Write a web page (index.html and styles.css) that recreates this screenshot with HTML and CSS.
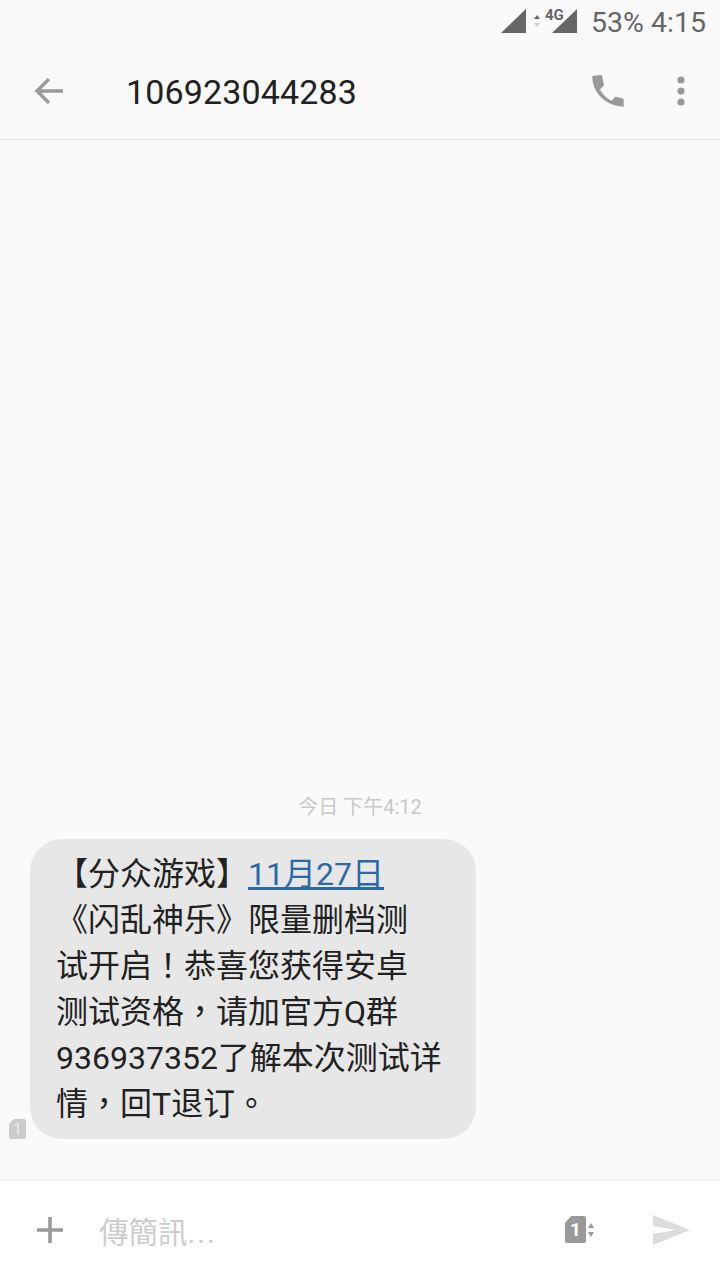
FILE: index.html
```html
<!DOCTYPE html>
<html lang="zh">
<head>
  <meta charset="UTF-8">
  <meta name="viewport" content="width=device-width, initial-scale=1.0">
  <title>106923044283</title>
  <link rel="stylesheet" href="styles.css">
</head>
<body>

<div class="screen">
  <div class="status">
    <svg class="status-icons" width="78" height="30" viewBox="0 -4 78 30">
      <polygon points="1,25 26,1 26,25" fill="#666"/>
      <polygon points="34,11 37,7 40,11" fill="#666"/>
      <polygon points="34,15 37,19 40,15" fill="#ccc"/>
      <polygon points="52,25 77,1 77,25" fill="#666"/>
      <text x="45" y="12" class="net">4G</text>
    </svg>
    <span class="status-text">53% 4:15</span>
  </div>

  <header class="toolbar">
    <svg class="back" width="30" height="28" viewBox="0 0 30 28">
      <path d="M29 14H3M15 2L3 14l12 12" fill="none" stroke="#999" stroke-width="3.4"/>
    </svg>
    <h1 class="number">106923044283</h1>
    <svg class="call" width="34" height="32" viewBox="3 3 18 18">
      <path d="M6.6 3.2 3.2 3.6C3 12.8 10.6 20.6 20.8 20.8v-4.4l-4.6-1.1-2.2 2.2c-2.9-1.4-5-3.6-6.5-6.4l2.2-2.3L8.6 3.2z" fill="#999"/>
    </svg>
    <svg class="more" width="8" height="30" viewBox="0 0 8 30">
      <circle cx="4" cy="4" r="3.6" fill="#999"/>
      <circle cx="4" cy="15" r="3.6" fill="#999"/>
      <circle cx="4" cy="26" r="3.6" fill="#999"/>
    </svg>
  </header>

  <main class="thread">
    <div class="time">今日 下午4:12</div>
    <div class="msg">
      <div class="sim-tag">1</div>
      <div class="bubble">【分众游戏】<a class="link">11月27日</a><br>《闪乱神乐》限量删档测<br>试开启<span class="punct" lang="zh-Hant">！</span>恭喜您获得安卓<br>测试资格<span class="punct" lang="zh-Hant">，</span>请加官方Q群<br>936937352了解本次测试详<br>情<span class="punct" lang="zh-Hant">，</span>回T退订<span class="punct" lang="zh-Hant">。</span></div>
    </div>
  </main>

  <footer class="compose">
    <svg class="plus" width="26" height="26" viewBox="0 0 26 26">
      <path d="M13 0v26M0 13h26" stroke="#999" stroke-width="3.6"/>
    </svg>
    <div class="placeholder">傳簡訊<span class="dots">...</span></div>
    <div class="sim-pick">
      <div class="sim-big">1</div>
      <svg width="6" height="14" viewBox="0 0 6 14">
        <polygon points="0,5 3,0 6,5" fill="#999"/>
        <polygon points="0,9 3,14 6,9" fill="#999"/>
      </svg>
    </div>
    <svg class="send" width="38" height="30" viewBox="0 0 38 30">
      <polygon points="1,0 38,15 1,30 1,19 24,15 1,11" fill="#dcdcdc"/>
    </svg>
  </footer>
</div>

</body>
</html>
```

FILE: styles.css
```css
* { box-sizing: border-box; }

body {
  margin: 0;
  background: #fafafa;
  font-family: Roboto, "Noto Sans CJK SC", sans-serif;
}

.screen {
  display: flex;
  flex-direction: column;
  width: 720px;
  height: 1280px;
  overflow: hidden;
}

.status {
  display: flex;
  justify-content: flex-end;
  align-items: center;
  gap: 13px;
  height: 44px;
  padding-right: 14px;
}
.status-icons { margin-top: -6px; }
.status-text {
  font-size: 28.5px;
  color: #666;
}
.net {
  font-family: "Liberation Sans Narrow", Roboto, sans-serif;
  font-size: 15px;
  font-weight: 700;
  fill: #666;
}

.toolbar {
  display: flex;
  align-items: center;
  height: 96px;
  padding: 0 35px 0 34px;
  border-bottom: 1px solid #e4e4e4;
}
.back, .call, .more { margin-top: -2px; }
.number {
  flex: 1;
  margin: 0 0 0 62px;
  font-size: 34px;
  font-weight: 400;
  letter-spacing: .15px;
  color: #212121;
}
.more { margin-left: 52px; }

.thread {
  flex: 1;
  display: flex;
  flex-direction: column;
  justify-content: flex-end;
  padding-bottom: 40px;
}
.time {
  margin-bottom: 18px;
  text-align: center;
  font-size: 20px;
  line-height: 28px;
  color: #c8c8c8;
}
.msg {
  display: flex;
  align-items: flex-end;
  gap: 4px;
  padding-left: 9px;
}
.sim-tag {
  width: 17px;
  height: 20px;
  border-radius: 2px;
  clip-path: polygon(30% 0, 100% 0, 100% 100%, 0 100%, 0 25%);
  background: #ccc;
  color: #eee;
  font-size: 14px;
  line-height: 20px;
  text-align: center;
}
.bubble {
  width: 446px;
  padding: 12px 20px 12px 26px;
  border-radius: 32px;
  background: #e7e7e7;
  color: #212121;
  font-size: 32px;
  line-height: 46px;
  white-space: nowrap;
}
/* punctuation sits in the middle of the cell on the device */
.punct {
  font-family: "Noto Sans CJK TC", sans-serif;
  line-height: 0;
}
.link {
  color: #2a6aa8;
  text-decoration: underline;
}

.compose {
  display: flex;
  align-items: center;
  height: 101px;
  padding: 0 30px 2px 37px;
  background: #fff;
  border-top: 2px solid #f3f3f3;
}
.placeholder {
  flex: 1;
  margin-left: 36px;
  font-family: Roboto, "Noto Sans CJK TC", sans-serif;
  font-size: 29.5px;
  color: #ccc;
}
.dots { letter-spacing: 2px; }
.sim-pick {
  display: flex;
  align-items: center;
  gap: 2px;
}
.sim-big {
  width: 21px;
  height: 27px;
  border-radius: 2px;
  clip-path: polygon(30% 0, 100% 0, 100% 100%, 0 100%, 0 25%);
  background: #999;
  color: #fff;
  font-size: 19px;
  font-weight: 700;
  line-height: 27px;
  text-align: center;
}
.send { margin-left: 58px; }
```
